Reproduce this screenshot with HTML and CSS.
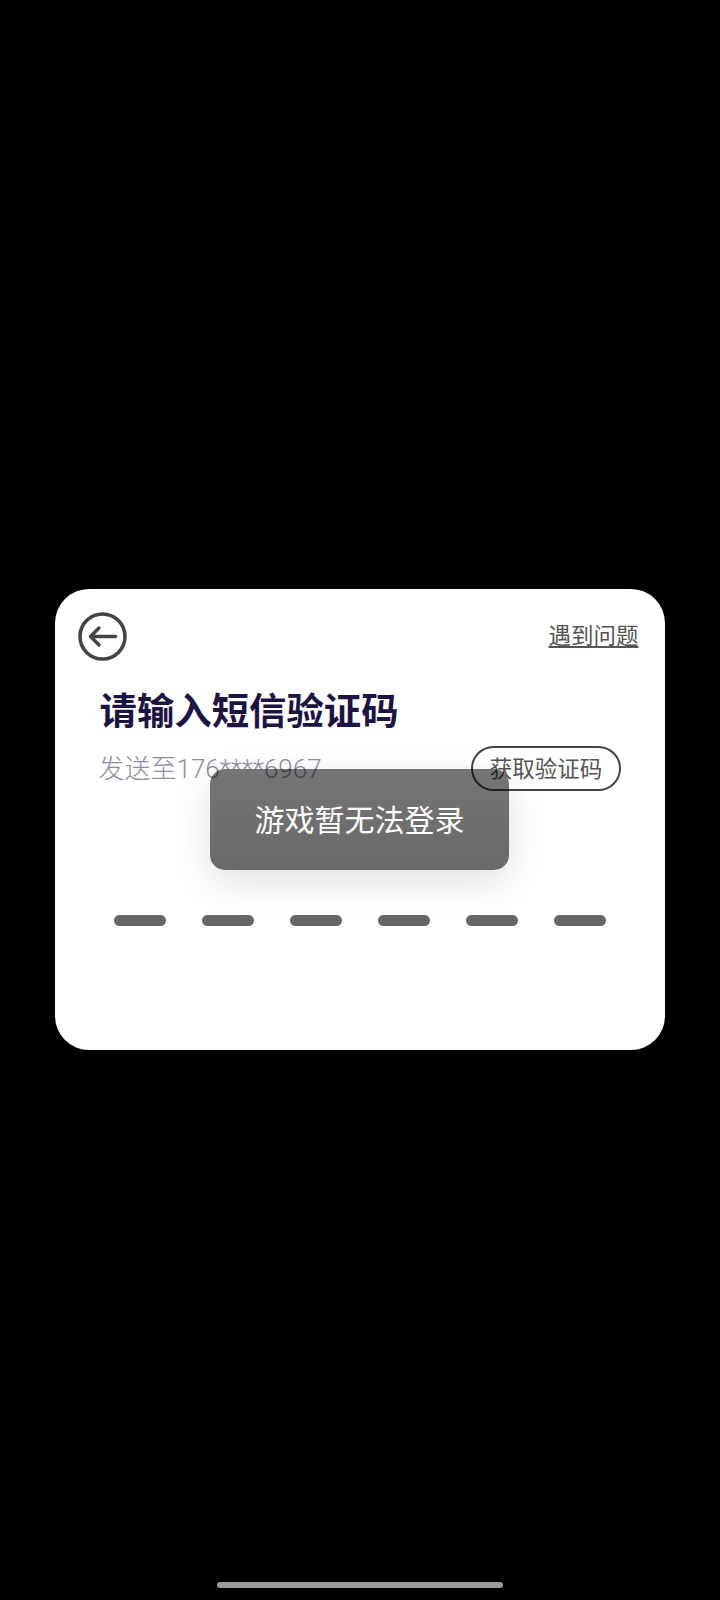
FILE: index.html
```html
<!DOCTYPE html>
<html lang="zh-CN">
<head>
  <meta charset="UTF-8" />
  <meta name="viewport" content="width=device-width, initial-scale=1.0"/>
  <title>请输入短信验证码</title>
  <link rel="stylesheet" href="styles.css">
</head>
<body>

<div class="card">
  <div class="top-row">
    <a class="back" href="#" aria-label="返回">
      <svg width="49" height="49" viewBox="0 0 49 49" fill="none" stroke="#444" stroke-linecap="round" stroke-linejoin="round">
        <circle cx="24.5" cy="24.5" r="22.5" stroke-width="3.6"/>
        <path d="M37.5 24.5H13M21 16l-8.5 8.5 8.5 8.5" stroke-width="3.4"/>
      </svg>
    </a>
    <a class="help" href="#">遇到问题</a>
  </div>

  <h1>请输入短信验证码</h1>

  <div class="send-row">
    <span class="phone">发送至176****6967</span>
    <button class="get-code">获取验证码</button>
  </div>

  <div class="dashes">
    <span></span>
    <span></span>
    <span></span>
    <span></span>
    <span></span>
    <span></span>
  </div>

  <div class="toast">游戏暂无法登录</div>
</div>

<div class="home-bar"></div>

</body>
</html>
```

FILE: styles.css
```css
html, body {
  height: 100%;
}
body {
  margin: 0;
  height: 1600px;
  box-sizing: border-box;
  padding: 589px 0 12px;
  background: #000;
  font-family: Roboto, 'Noto Sans CJK SC', sans-serif;
  display: flex;
  flex-direction: column;
  align-items: center;
  overflow: hidden;
}
.card {
  position: relative;
  box-sizing: border-box;
  width: 610px;
  height: 461px;
  padding: 23px 26.5px 0 22.5px;
  background: #fff;
  border-radius: 34px;
}
.top-row {
  display: flex;
  justify-content: space-between;
  align-items: center;
  height: 49px;
}
.back {
  display: block;
  height: 49px;
}
.help {
  margin-top: -2px;
  font-size: 22.5px;
  line-height: 28px;
  color: #555;
}
h1 {
  margin: 29px 0 0 22px;
  font-size: 37.4px;
  line-height: 44px;
  font-weight: 700;
  color: #1d1442;
}
.send-row {
  display: flex;
  justify-content: space-between;
  align-items: center;
  margin-top: 12px;
  padding: 0 17.5px 0 21px;
}
.phone {
  margin-top: -4px;
  font-size: 26px;
  font-weight: 300;
  color: #8d8da0;
}
.get-code {
  box-sizing: border-box;
  width: 150px;
  height: 44.5px;
  padding: 0 0 3px;
  background: #fff;
  border: 2px solid #444;
  border-radius: 23px;
  font-family: inherit;
  font-size: 22.5px;
  color: #555;
}
.dashes {
  display: flex;
  justify-content: space-between;
  margin-top: 124px;
  padding: 0 32.5px 0 36px;
}
.dashes span {
  width: 52.5px;
  height: 11px;
  background: #666;
  border-radius: 5.5px;
}
.toast {
  position: absolute;
  left: 155px;
  top: 180px;
  width: 299px;
  height: 101px;
  padding-bottom: 4px;
  box-sizing: border-box;
  display: flex;
  align-items: center;
  justify-content: center;
  background: linear-gradient(rgba(0, 0, 0, 0.54), rgba(0, 0, 0, 0.59));
  border-radius: 15px;
  box-shadow: 0 12px 36px rgba(0, 0, 0, 0.12);
  font-size: 30px;
  color: #fff;
}
.home-bar {
  width: 286px;
  height: 6px;
  margin-top: auto;
  background: #9b9b9b;
  border-radius: 3px;
}
```
